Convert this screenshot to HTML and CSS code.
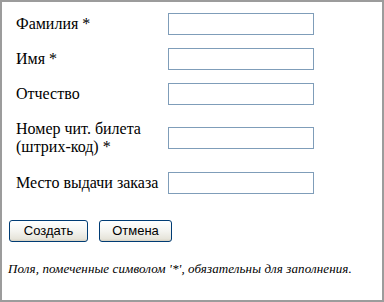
FILE: index.html
```html
<!DOCTYPE html>
<html lang="ru">
<head>
<meta charset="utf-8">
<link rel="stylesheet" href="styles.css">
</head>
<body>
<div class="frame">
  <table class="form">
    <tr class="row">
      <td class="label">Фамилия *</td>
      <td class="field"><input class="text" type="text"></td>
    </tr>
    <tr class="row">
      <td class="label">Имя *</td>
      <td class="field"><input class="text" type="text"></td>
    </tr>
    <tr class="row">
      <td class="label">Отчество</td>
      <td class="field"><input class="text" type="text"></td>
    </tr>
    <tr class="row tall">
      <td class="label">Номер чит. билета<br>(штрих-код) *</td>
      <td class="field"><input class="text" type="text"></td>
    </tr>
    <tr class="row">
      <td class="label">Место выдачи заказа</td>
      <td class="field"><input class="text" type="text"></td>
    </tr>
  </table>
  <div class="buttons">
    <button class="btn btn-create" type="button">Создать</button>
    <button class="btn btn-cancel" type="button">Отмена</button>
  </div>
  <p class="note">Поля, помеченные символом '*', обязательны для заполнения.</p>
</div>
</body>
</html>
```
FILE: styles.css
```css
html, body {
  margin: 0;
  padding: 0;
  background: #fff;
}
.frame {
  box-sizing: border-box;
  width: 384px;
  height: 302px;
  border: 2px solid #9c9c9c;
  padding: 4px 6px 0 6px;
  font-family: "Liberation Serif", serif;
  color: #000;
}
.form {
  border-collapse: collapse;
  border-spacing: 0;
}
.row {
  height: 35px;
}
.row.tall {
  height: 54px;
}
.label {
  padding: 0 0 0 8px;
  width: 152px;
  font-family: "Liberation Serif", serif;
  font-size: 16px;
  line-height: 18px;
  vertical-align: middle;
  white-space: nowrap;
  -webkit-font-smoothing: none;
  font-smooth: never;
}
.field {
  padding: 0;
  vertical-align: middle;
}
.text {
  display: block;
  box-sizing: border-box;
  width: 146px;
  height: 22px;
  margin: 0;
  border: 1px solid #7f9db9;
  background: #fff;
  padding: 0 2px;
}
.buttons {
  display: flex;
  gap: 11px;
  margin: 20px 0 0 1px;
}
.btn {
  box-sizing: border-box;
  height: 22px;
  padding: 0;
  margin: 0;
  border: 1px solid #003c74;
  border-radius: 3px;
  background: linear-gradient(#ffffff 0%, #f4f4f0 50%, #e6e4da 90%, #d6d0c0 100%);
  font-family: "Liberation Sans", Arial, sans-serif;
  font-size: 13px;
  color: #000;
  line-height: 20px;
  text-align: center;
}
.btn-create {
  width: 79px;
}
.btn-cancel {
  width: 73px;
}
.note {
  margin: 19px 0 0 0;
  font-family: "Liberation Serif", serif;
  font-style: italic;
  font-size: 13px;
  line-height: 16px;
  letter-spacing: 0.1px;
}
```
